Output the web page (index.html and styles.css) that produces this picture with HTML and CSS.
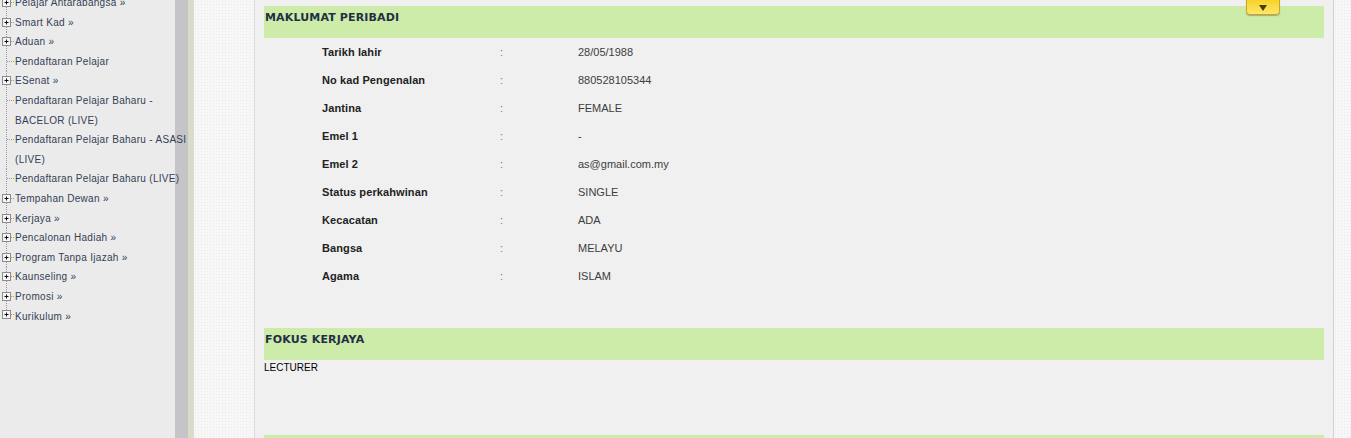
FILE: index.html
```html
<!DOCTYPE html>
<html lang="ms">
<head>
<meta charset="utf-8">
<title>Maklumat Peribadi</title>
<link rel="stylesheet" href="styles.css">
</head>
<body>
<div class="page">
  <nav class="sidebar">
    <ul class="tree">
      <li class="node parent"><svg class="ico" viewBox="0 0 15 19" width="15" height="19"><rect x="2.5" y="5.5" width="8" height="8" fill="#f6f6f6" stroke="#8c8c8c"/><path d="M4.5 9.5h4M6.5 7.5v4" stroke="#111" stroke-width="1"/><path d="M11 9.5h4" stroke="#999" stroke-dasharray="1 1"/></svg><span class="label">Pelajar Antarabangsa »</span></li>
      <li class="node parent"><svg class="ico" viewBox="0 0 15 19" width="15" height="19"><rect x="2.5" y="5.5" width="8" height="8" fill="#f6f6f6" stroke="#8c8c8c"/><path d="M4.5 9.5h4M6.5 7.5v4" stroke="#111" stroke-width="1"/><path d="M11 9.5h4" stroke="#999" stroke-dasharray="1 1"/></svg><span class="label">Smart Kad »</span></li>
      <li class="node parent"><svg class="ico" viewBox="0 0 15 19" width="15" height="19"><rect x="2.5" y="5.5" width="8" height="8" fill="#f6f6f6" stroke="#8c8c8c"/><path d="M4.5 9.5h4M6.5 7.5v4" stroke="#111" stroke-width="1"/><path d="M11 9.5h4" stroke="#999" stroke-dasharray="1 1"/></svg><span class="label">Aduan »</span></li>
      <li class="node leaf"><svg class="ico" viewBox="0 0 15 19" width="15" height="19"><path d="M7 9.5h8" stroke="#999" stroke-dasharray="1 1"/></svg><span class="label">Pendaftaran Pelajar</span></li>
      <li class="node parent"><svg class="ico" viewBox="0 0 15 19" width="15" height="19"><rect x="2.5" y="5.5" width="8" height="8" fill="#f6f6f6" stroke="#8c8c8c"/><path d="M4.5 9.5h4M6.5 7.5v4" stroke="#111" stroke-width="1"/><path d="M11 9.5h4" stroke="#999" stroke-dasharray="1 1"/></svg><span class="label">ESenat »</span></li>
      <li class="node leaf"><svg class="ico" viewBox="0 0 15 19" width="15" height="19"><path d="M7 9.5h8" stroke="#999" stroke-dasharray="1 1"/></svg><span class="label">Pendaftaran Pelajar Baharu - BACELOR (LIVE)</span></li>
      <li class="node leaf"><svg class="ico" viewBox="0 0 15 19" width="15" height="19"><path d="M7 9.5h8" stroke="#999" stroke-dasharray="1 1"/></svg><span class="label">Pendaftaran Pelajar Baharu - ASASI (LIVE)</span></li>
      <li class="node leaf"><svg class="ico" viewBox="0 0 15 19" width="15" height="19"><path d="M7 9.5h8" stroke="#999" stroke-dasharray="1 1"/></svg><span class="label">Pendaftaran Pelajar Baharu (LIVE)</span></li>
      <li class="node parent"><svg class="ico" viewBox="0 0 15 19" width="15" height="19"><rect x="2.5" y="5.5" width="8" height="8" fill="#f6f6f6" stroke="#8c8c8c"/><path d="M4.5 9.5h4M6.5 7.5v4" stroke="#111" stroke-width="1"/><path d="M11 9.5h4" stroke="#999" stroke-dasharray="1 1"/></svg><span class="label">Tempahan Dewan »</span></li>
      <li class="node parent"><svg class="ico" viewBox="0 0 15 19" width="15" height="19"><rect x="2.5" y="5.5" width="8" height="8" fill="#f6f6f6" stroke="#8c8c8c"/><path d="M4.5 9.5h4M6.5 7.5v4" stroke="#111" stroke-width="1"/><path d="M11 9.5h4" stroke="#999" stroke-dasharray="1 1"/></svg><span class="label">Kerjaya »</span></li>
      <li class="node parent"><svg class="ico" viewBox="0 0 15 19" width="15" height="19"><rect x="2.5" y="5.5" width="8" height="8" fill="#f6f6f6" stroke="#8c8c8c"/><path d="M4.5 9.5h4M6.5 7.5v4" stroke="#111" stroke-width="1"/><path d="M11 9.5h4" stroke="#999" stroke-dasharray="1 1"/></svg><span class="label">Pencalonan Hadiah »</span></li>
      <li class="node parent"><svg class="ico" viewBox="0 0 15 19" width="15" height="19"><rect x="2.5" y="5.5" width="8" height="8" fill="#f6f6f6" stroke="#8c8c8c"/><path d="M4.5 9.5h4M6.5 7.5v4" stroke="#111" stroke-width="1"/><path d="M11 9.5h4" stroke="#999" stroke-dasharray="1 1"/></svg><span class="label">Program Tanpa Ijazah »</span></li>
      <li class="node parent"><svg class="ico" viewBox="0 0 15 19" width="15" height="19"><rect x="2.5" y="5.5" width="8" height="8" fill="#f6f6f6" stroke="#8c8c8c"/><path d="M4.5 9.5h4M6.5 7.5v4" stroke="#111" stroke-width="1"/><path d="M11 9.5h4" stroke="#999" stroke-dasharray="1 1"/></svg><span class="label">Kaunseling »</span></li>
      <li class="node parent"><svg class="ico" viewBox="0 0 15 19" width="15" height="19"><rect x="2.5" y="5.5" width="8" height="8" fill="#f6f6f6" stroke="#8c8c8c"/><path d="M4.5 9.5h4M6.5 7.5v4" stroke="#111" stroke-width="1"/><path d="M11 9.5h4" stroke="#999" stroke-dasharray="1 1"/></svg><span class="label">Promosi »</span></li>
      <li class="node parent"><svg class="ico" viewBox="0 0 15 19" width="15" height="19"><rect x="2.5" y="3.5" width="8" height="8" fill="#f6f6f6" stroke="#8c8c8c"/><path d="M4.5 7.5h4M6.5 5.5v4" stroke="#111" stroke-width="1"/><path d="M11 7.5h4" stroke="#999" stroke-dasharray="1 1"/></svg><span class="label">Kurikulum »</span></li>
    </ul>
  </nav>
  <div class="strip strip-grey"></div>
  <div class="strip strip-olive"></div>
  <div class="gutter gutter-left"></div>
  <main class="panel">
    <div class="toggle"><svg viewBox="0 0 10 8" width="10" height="8"><polygon points="1,1 9,1 5,7" fill="#4a3d0c"/></svg></div>
    <section class="block">
      <h2 class="block-title">MAKLUMAT PERIBADI</h2>
      <table class="info">
        <colgroup><col class="c-indent"><col class="c-label"><col class="c-colon"><col class="c-value"></colgroup>
        <tr><td></td><th>Tarikh lahir</th><td class="colon">:</td><td class="val">28/05/1988</td></tr>
        <tr><td></td><th>No kad Pengenalan</th><td class="colon">:</td><td class="val">880528105344</td></tr>
        <tr><td></td><th>Jantina</th><td class="colon">:</td><td class="val">FEMALE</td></tr>
        <tr><td></td><th>Emel 1</th><td class="colon">:</td><td class="val">-</td></tr>
        <tr><td></td><th>Emel 2</th><td class="colon">:</td><td class="val">as@gmail.com.my</td></tr>
        <tr><td></td><th>Status perkahwinan</th><td class="colon">:</td><td class="val">SINGLE</td></tr>
        <tr><td></td><th>Kecacatan</th><td class="colon">:</td><td class="val">ADA</td></tr>
        <tr><td></td><th>Bangsa</th><td class="colon">:</td><td class="val">MELAYU</td></tr>
        <tr><td></td><th>Agama</th><td class="colon">:</td><td class="val">ISLAM</td></tr>
      </table>
    </section>
    <section class="block block-career">
      <h2 class="block-title">FOKUS KERJAYA</h2>
      <p class="career">LECTURER</p>
    </section>
    <section class="block block-next">
      <h2 class="block-title"></h2>
    </section>
  </main>
  <div class="gutter gutter-right"></div>
</div>
</body>
</html>
```

FILE: styles.css
```css
html, body {
  margin: 0;
  padding: 0;
  height: 100%;
  overflow: hidden;
}

body {
  font-family: "Liberation Sans", Arial, sans-serif;
  background: #f4f4f4;
}

.page {
  display: flex;
  height: 438px;
}

/* ---------- sidebar ---------- */
.sidebar {
  flex: 0 0 175px;
  width: 175px;
  background: #ebebeb;
  position: relative;
  z-index: 2;
}

.tree {
  list-style: none;
  margin: -7px 0 0 0;
  padding: 0;
  width: 188px;
}

.node {
  display: flex;
  align-items: flex-start;
  font-size: 10px;
  line-height: 19.6px;
  letter-spacing: 0.3px;
  color: #334055;
  background: repeating-linear-gradient(to bottom, #9a9a9a 0 1px, transparent 1px 2px) 6px 0 / 1px 100% no-repeat;
}

.node:last-child {
  background-size: 1px 4px;
}

.ico {
  flex: 0 0 15px;
  display: block;
}

.label {
  width: 172px;
}

/* ---------- decorative strips ---------- */
.strip {
  height: 100%;
}

.strip-grey {
  flex: 0 0 13px;
  background: #c5c4c6;
}

.strip-olive {
  flex: 0 0 6px;
  background: #dadbc9;
}

.gutter {
  background-color: #f7f7f7;
  background-image: radial-gradient(#e9e9e9 0.6px, transparent 0.8px);
  background-size: 3px 3px;
}

.gutter-left {
  flex: 0 0 60px;
}

.gutter-right {
  flex: 1 1 auto;
}

/* ---------- main panel ---------- */
.panel {
  flex: 0 0 1080px;
  box-sizing: border-box;
  background: #f0f0f0;
  border-left: 1px solid #dcdcdc;
  border-right: 1px solid #d2d2d2;
  padding: 6px 9px 0 9px;
  position: relative;
}

.toggle {
  position: absolute;
  top: 0;
  right: 53px;
  width: 34px;
  height: 15px;
  box-sizing: border-box;
  border: 1px solid #c7a72a;
  border-top: none;
  border-radius: 0 0 4px 4px;
  background: linear-gradient(to bottom, #f6d328, #fde66d);
  box-shadow: 0 1px 1px rgba(0,0,0,0.25);
  display: flex;
  justify-content: center;
  align-items: flex-start;
  padding-top: 4px;
}

.toggle svg {
  display: block;
}

.block-title {
  margin: 0;
  height: 32px;
  box-sizing: border-box;
  padding: 5px 0 0 1px;
  background: #cdeba9;
  font-family: "DejaVu Sans", Verdana, sans-serif;
  font-size: 11px;
  font-weight: bold;
  line-height: 13px;
  color: #1f3045;
  letter-spacing: 0.15px;
}

.info {
  border-collapse: collapse;
  table-layout: fixed;
  width: 100%;
}

.c-indent { width: 58px; }
.c-label { width: 178px; }
.c-colon { width: 78px; }

.info th,
.info td {
  padding: 0;
  height: 28px;
  vertical-align: middle;
  font-size: 11px;
  text-align: left;
}

.info th {
  font-weight: bold;
  color: #222;
  letter-spacing: 0.1px;
}

.info .colon {
  color: #7d7d7d;
}

.info .val {
  color: #3d3d3d;
}

.block-career {
  margin-top: 38px;
}

.career {
  margin: 0;
  padding-top: 1px;
  font-size: 10px;
  line-height: 14px;
  color: #000;
  height: 74px;
}

.block-next .block-title {
  height: 10px;
}
```
